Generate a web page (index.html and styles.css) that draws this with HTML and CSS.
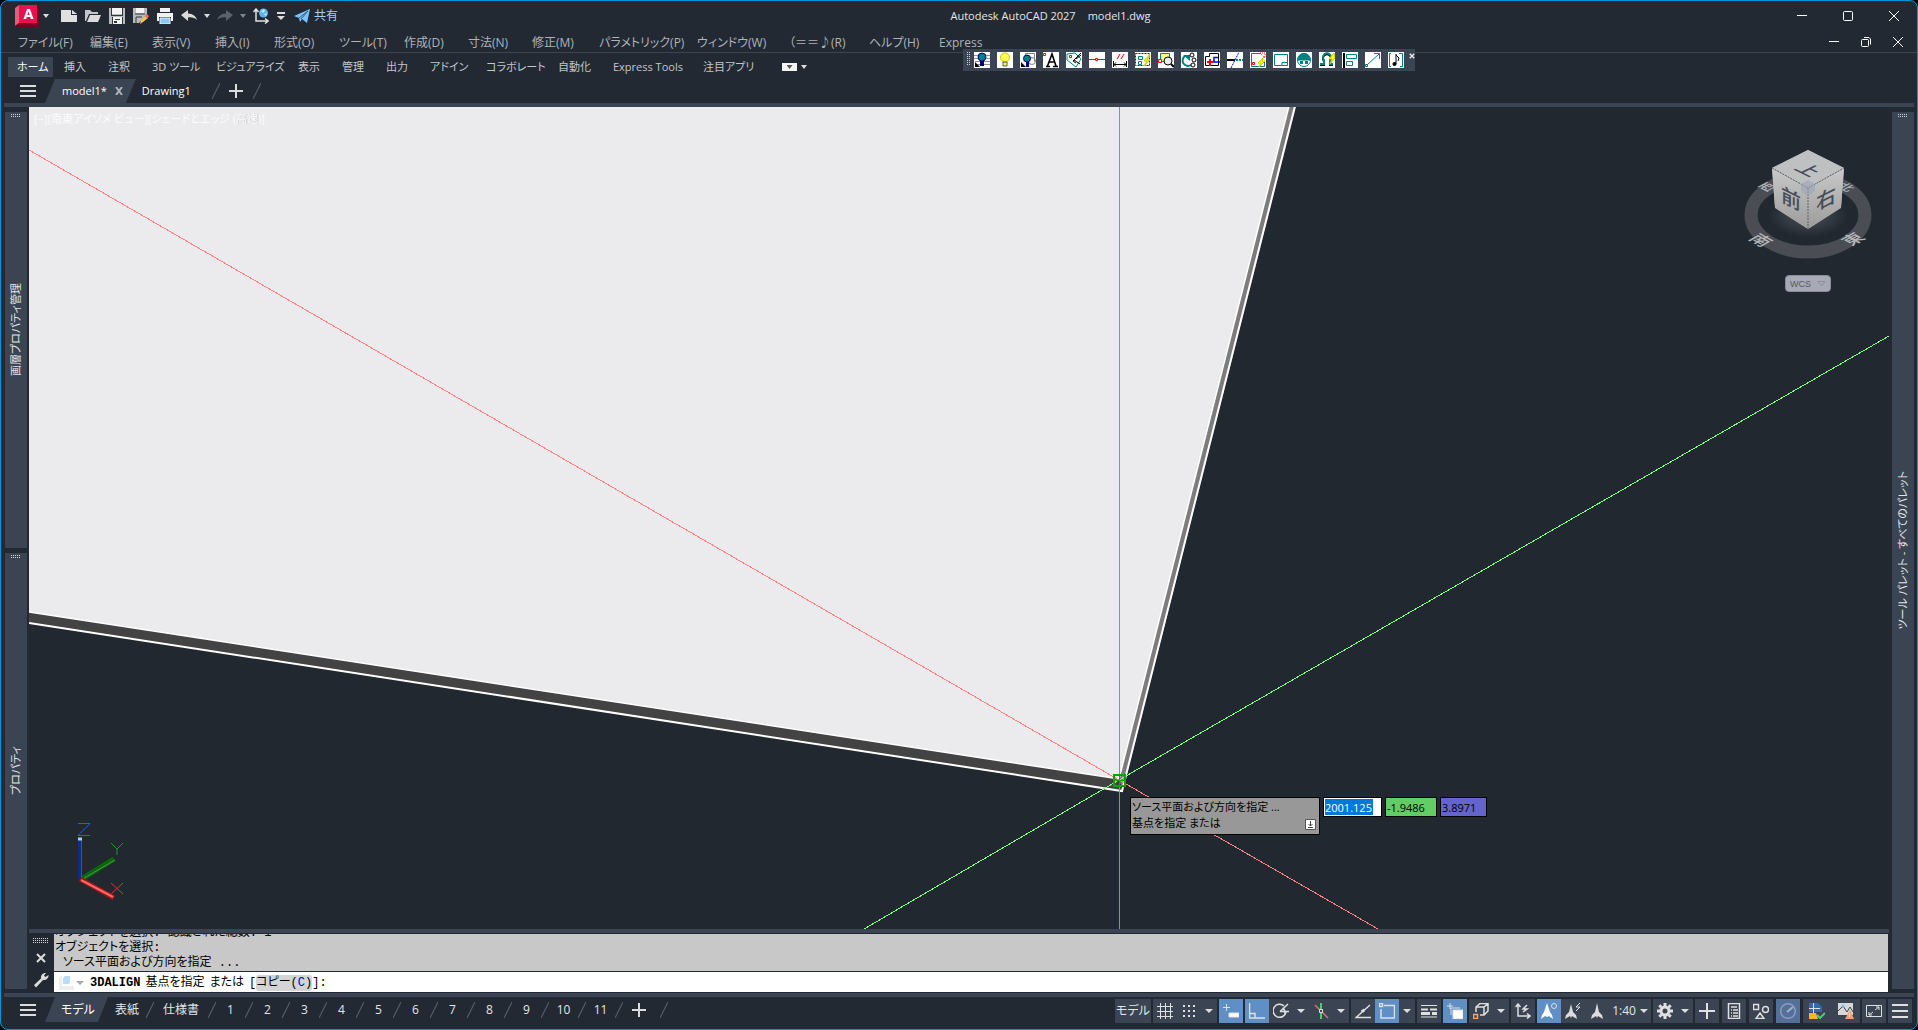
FILE: index.html
```html
<!DOCTYPE html>
<html lang="ja">
<head>
<meta charset="utf-8">
<title>Autodesk AutoCAD 2027 model1.dwg</title>
<link rel="stylesheet" href="styles.css">
</head>
<body>
<div class="app">
  <header class="titlebar">
    <div class="quick">
      <button class="qbtn logo" aria-label="アプリケーション メニュー"><svg width="24" height="22" viewBox="0 0 24 22"><path d="M0 3L4 0V18L0 21z" fill="#e65a7c"/><path d="M0 21L4 18H22V0L24 2V22H3z" fill="#73061f"/><path d="M4 0H22V18H4z" fill="#e8114f"/><path d="M8.500 14L12 4h3l3.500 10h-2.700l-.6-2h-3.500l-.6 2zM12.300 10h2.300l-1.150-3.600z" fill="#fff"/></svg></button>
      <button class="qbtn caret-btn" aria-label="メニュー"><i class="caret"></i></button>
      <button class="qbtn" aria-label="新規"><svg class="i16" viewBox="0 0 16 16"><path d="M0 2h10v5h6v7H0zM11 2l5 4h-5z" fill="#e0e0e0"/></svg></button>
      <button class="qbtn" aria-label="開く"><svg class="i16" viewBox="0 0 16 16"><path d="M0 2h5l2 2h6v2H4L1 13H0z" fill="#c4c6c9"/><path d="M5 7h11l-3 7H2z" fill="#dcdcdc"/></svg></button>
      <button class="qbtn" aria-label="上書き保存"><svg class="i16" viewBox="0 0 16 16"><path d="M0 0h16v16H0z" fill="#b9bbbe"/><path d="M3 0h10v6H3zM4 9h9v7H4z" fill="#f4f4f4"/><path d="M2 0h1v7h10V0h1v8H2z" fill="#33363c"/><path d="M3 9h1v7H3zM13 9h1v7h-1zM6 11h5v1H6zM5 13h3v2H5z" fill="#33363c"/></svg></button>
      <button class="qbtn" aria-label="名前を付けて保存"><svg class="i16" viewBox="0 0 16 16"><path d="M0 0h14v6L6 15H0z" fill="#b9bbbe"/><path d="M3 0h8v5H3z" fill="#f4f4f4"/><path d="M2 6h10M3 15V9h6" stroke="#33363c" fill="none"/><path d="M8 12l5-5 2 3-5 4-3 2z" fill="#f5c451"/><path d="M12 8l2-2 2 2-2 3z" fill="#f0686a"/></svg></button>
      <button class="qbtn" aria-label="印刷"><svg class="i16" viewBox="0 0 16 16"><path d="M3 0h10v4H3zM0 5h16v8h-2V9H2v4H0z" fill="#f2f2f2"/><path d="M3 10h10v6H3z" fill="#8cc8f4" stroke="#f2f2f2"/></svg></button>
      <button class="qbtn" aria-label="元に戻す"><svg class="i16" viewBox="0 0 16 16"><path d="M0 7l7-5v3.500c5 0 8 3 9 6.500-2-2-5-3-9-2.500V13z" fill="#dcdcdc"/></svg></button>
      <button class="qbtn mini" aria-label="元に戻す履歴"><i class="caret"></i></button>
      <button class="qbtn" aria-label="やり直し"><svg class="i16" viewBox="0 0 16 16"><path d="M16 7L9 2v3.500C4 5.500 1 8.500 0 12c2-2 5-3 9-2.500V13z" fill="#5b6169"/></svg></button>
      <button class="qbtn mini" aria-label="やり直し履歴"><i class="caret dim"></i></button>
      <button class="qbtn" aria-label="UCS"><svg class="i16" viewBox="0 0 16 16"><path d="M3 2v11h11M.5 4L3 1l2.500 3M12 10.500l3 2.500-3 2.500" stroke="#e0e0e0" stroke-width="1.500" fill="none"/><circle cx="10.500" cy="5" r="4.500" fill="#5eb4ee"/><path d="M8 3l3-2 1 2-2 2zM11 6l3-1-1 3z" fill="#c5e6fb"/></svg></button>
      <button class="qbtn mini wide" aria-label="カスタマイズ"><i class="caret over"></i></button>
      <a class="share" href="#"><svg width="16" height="16" viewBox="0 0 16 16"><path d="M0 8L16 1 13 15 8 11 6 14 5 10z" fill="#7cc4fb"/><path d="M5 10L14 3 7 11" fill="none" stroke="#2b5f8a"/></svg>共有</a>
    </div>
    <h1 class="title"><span>Autodesk AutoCAD 2027</span><span>model1.dwg</span></h1>
    <div class="winbtns">
      <button aria-label="最小化"><svg width="10" height="10"><path d="M0 4.500h10" /></svg></button>
      <button aria-label="最大化"><svg width="10" height="10"><rect x=".5" y=".5" width="9" height="9" rx="1"/></svg></button>
      <button aria-label="閉じる"><svg width="10" height="10"><path d="M0 0l10 10M10 0L0 10"/></svg></button>
    </div>
  </header>

  <nav class="menubar" aria-label="メニュー バー">
    <div class="menus">
      <a href="#">ファイル(F)</a><a href="#">編集(E)</a><a href="#">表示(V)</a><a href="#">挿入(I)</a><a href="#">形式(O)</a><a href="#">ツール(T)</a><a href="#">作成(D)</a><a href="#">寸法(N)</a><a href="#">修正(M)</a><a href="#">パラメトリック(P)</a><a href="#">ウィンドウ(W)</a><a href="#">（＝＝♪(R)</a><a href="#">ヘルプ(H)</a><a href="#">Express</a>
    </div>
    <div class="winbtns small">
      <button aria-label="図面を最小化"><svg width="10" height="10"><path d="M0 4.500h10"/></svg></button>
      <button aria-label="元のサイズ"><svg width="10" height="10"><rect x=".5" y="2.500" width="7" height="7" rx="1"/><path d="M3 .5h5l1.500 1.500v5.500"/></svg></button>
      <button aria-label="図面を閉じる"><svg width="10" height="10"><path d="M0 0l10 10M10 0L0 10"/></svg></button>
    </div>
  </nav>

  <nav class="ribbon" aria-label="リボン">
    <a href="#" class="on">ホーム</a><a href="#">挿入</a><a href="#">注釈</a><a href="#">3D ツール</a><a href="#">ビジュアライズ</a><a href="#">表示</a><a href="#">管理</a><a href="#">出力</a><a href="#">アドイン</a><a href="#">コラボレート</a><a href="#">自動化</a><a href="#">Express Tools</a><a href="#">注目アプリ</a>
    <button class="ribmode" aria-label="リボン表示"><span class="chip"><i class="caret"></i></span><i class="caret"></i></button>
  </nav>

  <div class="toolbar">
    <span class="grip"></span>
    <button aria-label="画層表示"><svg viewBox="0 0 16 16"><path d="M0 3.500h16M0 6.500h16M1 9.500h15M3 12.500h13" stroke="#909090"/><circle cx="8" cy="5" r="4" fill="#008080" stroke="#000080"/><path d="M6 9h4v5H6z" fill="#000080"/><path d="M1 10v5h5z" fill="#000"/></svg></button>
    <button aria-label="電球"><svg viewBox="0 0 16 16"><circle cx="8" cy="5.500" r="4.500" fill="#ffff50" stroke="#d0c000"/><path d="M6 10h4v4H6z" fill="#ffff50" stroke="#554"/></svg></button>
    <button aria-label="画層"><svg viewBox="0 0 16 16"><path d="M5.500 4V1.500h9v8" stroke="#808080" fill="none"/><circle cx="12" cy="9" r="3.500" stroke="#808080" fill="none"/><circle cx="7" cy="6.500" r="3.500" fill="#008080" stroke="#000080"/><path d="M6 10h3v5H6z" fill="#000080"/><path d="M1 10v5h5z" fill="#000"/></svg></button>
    <button aria-label="文字"><svg viewBox="0 0 16 16"><path d="M3 14.500h4M10 14.500h5M4.500 14L9 2l4 12M6 10h6" stroke="#000" stroke-width="1.600" fill="none"/><path d="M.5 1.500h2v2h-2z" fill="#fff" stroke="red"/></svg></button>
    <button aria-label="タグ"><svg viewBox="0 0 16 16"><path d="M1 2l8-1 6 6-5 8-9-7z" fill="none" stroke="#008080"/><path d="M15 1L8 8l6 4M8 8l-1 1 3 2M15 3l-5 4" stroke="#000" fill="none"/><path d="M3.500 3.500h2v2h-2z" stroke="red" fill="#fff"/></svg></button>
    <button aria-label="中点"><svg viewBox="0 0 16 16"><path d="M0 7.500h16" stroke="#008000"/><path d="M6.500 6.500h2v2h-2z" fill="#fff" stroke="red"/></svg></button>
    <button aria-label="寸法"><svg viewBox="0 0 16 16"><path d="M1.500 9v6M14.500 9v6M2 12.500h12M4 10.500l-2 2 2 2M12 10.500l2 2-2 2" stroke="#000" fill="none"/><path d="M5 7l3-5M9 7l3-5" stroke="red"/></svg></button>
    <button aria-label="クイック選択"><svg viewBox="0 0 16 16"><path d="M.5 1.500h14v12H.5z" fill="none" stroke="#800000" stroke-width="1" stroke-dasharray="2 1"/><path d="M3.500 4.500h4v3h-4zM3.500 9.500h3v3h-3z" fill="none" stroke="#008080"/><path d="M14 3l-5 6h3l-3 5 6-6h-3l3-5z" fill="#ff0" stroke="#cc0"/></svg></button>
    <button aria-label="検索"><svg viewBox="0 0 16 16"><path d="M2.500 1.500h9v8h-9z" fill="#ffff80" stroke="#008080"/><path d="M.5 7.500h3v3h-3z" fill="#fff" stroke="red"/><circle cx="10" cy="9" r="4" fill="#eee" stroke="#000"/><path d="M13 12l3 3" stroke="#000" stroke-width="2"/></svg></button>
    <button aria-label="回転"><svg viewBox="0 0 16 16"><path d="M4 4a5 5 0 1 0 6 9" fill="none" stroke="#008080" stroke-width="2"/><path d="M2 3h7v6z" fill="#008080"/><circle cx="11" cy="3" r="2" fill="#fff" stroke="#000"/><circle cx="13" cy="8" r="2" fill="#fff" stroke="#000"/><circle cx="12" cy="13" r="2" fill="#fff" stroke="#000"/></svg></button>
    <button aria-label="ブロック"><svg viewBox="0 0 16 16"><path d="M1.500 4.500h4v-3h9v12h-13z" fill="#fff" stroke="#000"/><path d="M6 7v7M3 10h6" stroke="red" stroke-width="2"/><path d="M10 9.500V5.500h4M9 10h7" stroke="#00f" stroke-width="1.500" fill="none"/></svg></button>
    <button aria-label="トリム"><svg viewBox="0 0 16 16"><path d="M0 8h8" stroke="#000" stroke-width="2"/><path d="M9 8h7" stroke="#008080" stroke-width="2" stroke-dasharray="2 1"/><path d="M4 16l8-16" stroke="#00f" stroke-dasharray="2 1"/></svg></button>
    <button aria-label="領域"><svg viewBox="0 0 16 16"><path d="M10 1.500H1.500v13h13V9" fill="none" stroke="#008080"/><path d="M10 1l5 5V1z" fill="none" stroke="red" stroke-dasharray="1 1"/><path d="M2.500 10.500h2v2h-2z" fill="#fff" stroke="red"/><path d="M14 5l-6 6h3l-2 4 6-6h-3z" fill="#ff0" stroke="#cc0"/></svg></button>
    <button aria-label="ビューポート"><svg viewBox="0 0 16 16"><path d="M1.500 2.500h13v11H9M1.500 2.500v11H9v-3h6" fill="none" stroke="#008080"/></svg></button>
    <button aria-label="顔"><svg viewBox="0 0 16 16"><circle cx="8" cy="8" r="6.500" fill="#fff" stroke="#008080"/><path d="M2 7a6 6 0 0 1 12 0z" fill="#008080"/><path d="M1 7.500h14" stroke="#008080" stroke-width="2"/><path d="M4 9h3v3H4zM9 9h3v3H9z" fill="#008080"/></svg></button>
    <button aria-label="スナップ"><svg viewBox="0 0 16 16"><path d="M1 13h4V9a4 4 0 1 1 6 0v4h3" fill="none" stroke="#000" stroke-width="2"/><path d="M1 12h4V8a4 4 0 1 1 6 0v4h3" fill="none" stroke="#008080" stroke-width="2"/><path d="M15 1l-5 6h3l-2 5 5-6z" fill="#ff0" stroke="#cc0"/></svg></button>
    <button aria-label="整列"><svg viewBox="0 0 16 16"><path d="M2 1v15" stroke="#000" stroke-width="2"/><path d="M4.500 2.500h10v4h-10zM4.500 9.500h6v4h-6z" fill="none" stroke="#008080"/></svg></button>
    <button aria-label="線分"><svg viewBox="0 0 16 16"><path d="M2 13L14 2M9 1.500h5.500V7" fill="none" stroke="#008080"/><path d="M.5 12.500h2v2h-2z" fill="#fff" stroke="#008080"/></svg></button>
    <button aria-label="音符"><svg viewBox="0 0 16 16"><path d="M3 1.500H1.500v13H3M11 1.500h3.500v13H12" fill="none" stroke="#008080"/><path d="M8 2v10M8 3l3 3-1 3" fill="none" stroke="#000"/><circle cx="6.500" cy="12" r="2" fill="#000"/></svg></button>
    <button class="tclose" aria-label="ツールバーを閉じる"><svg viewBox="0 0 8 8"><path d="M1 1l6 6M7 1L1 7" stroke="#e4e4e4" stroke-width="2"/></svg></button>
  </div>

  <nav class="doctabs" aria-label="図面タブ">
    <button class="burger" aria-label="図面一覧"></button>
    <a href="#" class="dtab on">model1*<svg width="8" height="8" viewBox="0 0 8 8"><path d="M1 0l6 8M7 0L1 8" stroke="#aeb3ba" stroke-width="2"/></svg></a>
    <a href="#" class="dtab">Drawing1</a>
    <i class="slash"></i>
    <button class="plus" aria-label="新規図面"></button>
    <i class="slash"></i>
  </nav>

  <div class="work">
    <aside class="rail left">
      <section><span class="dots"></span><h2>画層プロパティ管理</h2></section>
      <section><span class="dots"></span><h2>プロパティ</h2></section>
    </aside>

    <main class="center">
      <div class="canvas">
        <svg class="scene" aria-hidden="true">
          <path d="M0 505V0H1260L1090 672z" fill="#ebebed"/>
          <path d="M0 505L1090 672 1093 684 0 516z" fill="#434343"/>
          <path d="M1260 0h7L1094 683l-4-10z" fill="#7c7c7c"/>
          <path d="M0 505L1090 672 1260-1" fill="none" stroke="#fff" stroke-width="1.500"/>
          <path d="M0 516L1093 684 1266-1" fill="none" stroke="#fff" stroke-width="2"/>
          <g shape-rendering="crispEdges" fill="none">
            <path d="M0 43L1090 673 1349 822" stroke="#ff8080"/>
            <path d="M835 822L1090 673 1860 229 2900-371" stroke="#80ff80"/>
            <path d="M1090.500 0V2000" stroke="#8080ff"/>
            <path d="M1085 668h11v11h-11z" stroke="#00a800" stroke-width="2"/>
            <path d="M1085 673.500h11M1090.500 668v11" stroke="#00a800"/>
          </g>
        </svg>
        <span class="viewlabel">[−][南東アイソメ ビュー][シェードとエッジ (<span>高速</span>)]</span>

        <div class="viewcube">
          <svg width="144" height="130" viewBox="0 0 144 130">
            <defs>
              <linearGradient id="face" x1="0" y1="0" x2="0" y2="1"><stop offset="0" stop-color="#c9c9c9"/><stop offset="1" stop-color="#9c9c9c"/></linearGradient>
              <radialGradient id="glow"><stop offset="0" stop-color="#4c545c"/><stop offset="1" stop-color="#212830"/></radialGradient>
            </defs>
            <ellipse cx="72" cy="75" rx="57" ry="37" fill="none" stroke="#4a4d54" stroke-width="13"/>
            <ellipse cx="72" cy="75" rx="40" ry="22" fill="url(#glow)"/>
            <g class="compass">
              <text transform="matrix(.8 -.42 .8 .42 31 47)" y="5">西</text>
              <text transform="matrix(.8 .42 -.8 .42 110 47)" y="5">北</text>
            </g>
            <path d="M72 10l36 18-3 40-33 21-33-21-3-40z" fill="#aaa"/>
            <path d="M36 28L72 48V89L39 67z" fill="url(#face)"/>
            <path d="M108 28L72 48V89L105 67z" fill="url(#face)"/>
            <path d="M72 10L108 28 72 48 36 28z" fill="#bfc0c2"/>
            <path d="M36 28L72 48 108 28M72 48V89" fill="none" stroke="#5a5f66" stroke-dasharray="2 1"/>
            <path d="M72 40l7 4v7l-7 5-7-5v-7z" fill="#9aa5b8" opacity=".6"/>
            <g class="facetext">
              <text transform="matrix(.87 .43 -.87 .43 72 30)" y="7">上</text>
              <text transform="matrix(1 .5 0 1 55 58)" y="8">前</text>
              <text transform="matrix(1 -.5 0 1 90 58)" y="8">右</text>
            </g>
            <g class="compass big">
              <text transform="matrix(.8 .45 -.8 .45 25 100)" y="7">南</text>
              <text transform="matrix(.8 -.45 .8 .45 117 99)" y="7">東</text>
            </g>
          </svg>
          <button class="wcs">WCS<svg width="9" height="6"><path d="M1 .5h7L4.500 5z" fill="none" stroke="#8c8e99"/></svg></button>
        </div>

        <svg class="ucs" width="60" height="90" viewBox="0 0 60 90" aria-hidden="true">
          <path d="M7 1.500h12L7 13.500h12" fill="none" stroke="#1060ff"/>
          <path d="M40 21l6 6 6-6M46 27v6" fill="none" stroke="#18a018"/>
          <path d="M40 61l12 11M52 61L40 72" fill="none" stroke="#e83030"/>
          <path d="M9 58L43 37" stroke="#086808" stroke-width="5"/><path d="M10 58L44 38" stroke="#4a9a4a"/>
          <path d="M9 58V17" stroke="#0a2f80" stroke-width="4"/><path d="M10.500 57V17" stroke="#1560b8"/><path d="M7 17h4" stroke="#a0d0ff" stroke-width="3"/>
          <path d="M9 57L43 76" stroke="#981818" stroke-width="5"/><path d="M10 58L42 75" stroke="#ff6868" stroke-width="2"/>
        </svg>

        <div class="dyn">
          <p class="tip"><span>ソース平面および方向を指定 ...</span><span>基点を指定 または</span>
            <svg width="11" height="11" viewBox="0 0 11 11"><path d="M.5.5h10v10H.5z" fill="#fff" stroke="#555"/><path d="M5.500 2v5M3.500 5l2 2 2-2M3 8.500h5" fill="none" stroke="#444"/></svg></p>
          <input class="vx" aria-label="X" value="2001.125">
          <input class="vy" aria-label="Y" value="-1.9486">
          <input class="vz" aria-label="Z" value="3.8971">
        </div>
      </div>

      <section class="command">
        <div class="cmdside">
          <span class="cgrip"></span>
          <button aria-label="閉じる"><svg width="10" height="10" viewBox="0 0 10 10"><path d="M1 1l8 8M9 1L1 9" stroke="#dcdcdc" stroke-width="2"/></svg></button>
          <button aria-label="カスタマイズ"><svg width="16" height="16" viewBox="0 0 16 16"><path d="M1 13L8 6.500C7.500 3 10 .5 13 1L11 3.500l1.500 1.500L15.500 3C16 6 13 8.500 10 8L3 15.500z" fill="#dcdcdc"/></svg></button>
        </div>
        <div class="cmdmain">
          <div class="history">
            <p>オブジェクトを選択: 認識された総数: 1</p>
            <p>オブジェクトを選択:</p>
            <p class="ind">ソース平面および方向を指定 ...</p>
          </div>
          <label class="prompt">
            <svg width="16" height="16" viewBox="0 0 16 16"><path d="M0 3l3-3v11h12v4H0z" fill="#eceded"/><path d="M4 3l2-2h5v6l-1 2H4z" fill="#b8dbf6"/></svg>
            <i class="caret grey"></i>
            <b>3DALIGN</b><span>基点を指定</span><span>または</span>
            <span class="opt"><em>[</em><button>コピー(<strong>C</strong>)</button><em>]:</em></span>
            <input aria-label="コマンド">
          </label>
        </div>
      </section>
    </main>

    <aside class="rail right">
      <section><span class="dots"></span><h2>ツール パレット - すべてのパレット</h2></section>
    </aside>
  </div>

  <footer class="status">
    <nav class="layouts" aria-label="レイアウト タブ">
      <button class="burger" aria-label="レイアウト一覧"></button>
      <a href="#" class="dtab on">モデル</a>
      <a href="#" class="lt wide">表紙</a><a href="#" class="lt wider">仕様書</a><a href="#" class="lt">1</a><a href="#" class="lt">2</a><a href="#" class="lt">3</a><a href="#" class="lt">4</a><a href="#" class="lt">5</a><a href="#" class="lt">6</a><a href="#" class="lt">7</a><a href="#" class="lt">8</a><a href="#" class="lt">9</a><a href="#" class="lt">10</a><a href="#" class="lt">11</a>
      <button class="plus" aria-label="新規レイアウト"></button><i class="slash"></i>
    </nav>
    <div class="tools">
      <div class="grp"><button class="txt">モデル</button></div>
      <div class="grp"><button aria-label="グリッド"><svg viewBox="0 0 16 16"><path d="M3.500 0v16M8.500 0v16M13.500 0v16M0 3.500h16M0 8.500h16M0 13.500h16"/></svg></button><button aria-label="スナップ"><svg viewBox="0 0 16 16"><path d="M2 3h13M2 8h13M2 13h13" stroke-width="2" stroke-dasharray="2 3"/></svg></button><button class="dd" aria-label="スナップ設定"><i class="caret"></i></button></div>
      <div class="grp"><button class="on" aria-label="ダイナミック入力"><svg viewBox="0 0 16 16"><path d="M0 4.500h7M3.500 1v7"/><path d="M6 10h10v4H6z" fill="#fff"/></svg></button></div>
      <div class="grp"><button class="on" aria-label="直交モード"><svg viewBox="0 0 16 16"><path d="M.5 0v15H16M1 10.500h5V15" stroke-width="1.500"/></svg></button><button aria-label="極トラッキング"><svg viewBox="0 0 16 16"><path d="M11 3A6.500 6.500 0 1 0 13 9M7 8.500h9M7 8.500L15 1M10 5.500q2 1 2 5" stroke-width="1.500"/></svg></button><button class="dd" aria-label="極設定"><i class="caret"></i></button><button aria-label="アイソメ"><svg viewBox="0 0 16 16"><path d="M2 2l13 13" stroke="#d87070" stroke-width="1.500"/><path d="M8 0v16" stroke="#50c878" stroke-width="2"/><path d="M6.500 6.500h3v3h-3z" fill="#3b4453"/></svg></button><button class="dd" aria-label="アイソメ設定"><i class="caret"></i></button></div>
      <div class="grp"><button aria-label="オブジェクト スナップ トラッキング"><svg viewBox="0 0 16 16"><path d="M16 14.500H1L15 2" stroke-width="1.500"/><path d="M6 8l3-2v3z" fill="#dcdcdc"/></svg></button><button class="on" aria-label="オブジェクト スナップ"><svg viewBox="0 0 16 16"><path d="M5 2.500h10.500v12.500H2V6M.5.5h3v3h-3z" stroke-width="1.500"/></svg></button><button class="dd" aria-label="OSNAP設定"><i class="caret"></i></button></div>
      <div class="grp"><button aria-label="線の太さ"><svg viewBox="0 0 16 16"><path d="M0 2.500h16M0 14h16"/><path d="M0 6.500h7M9 6.500h7" stroke-width="2"/><path d="M0 10.500h9M11 10.500h5" stroke-width="3"/></svg></button></div>
      <div class="grp"><button class="on" aria-label="選択の循環"><svg viewBox="0 0 16 16"><path d="M0 3h6M3 0v6M4 12V5h9"/><path d="M6 7h10v9H6z" fill="#fff"/></svg></button></div>
      <div class="grp"><button aria-label="3D オブジェクト スナップ"><svg viewBox="0 0 16 16"><path d="M3 9V4l4-3.500h8V8l-4 4H7M3 4h8v8M11 4l4-3.500" stroke-width="1.500"/><path d="M.5 11.500h4v4h-4z" stroke="#f0a878" stroke-width="1.500"/></svg></button><button class="dd" aria-label="3D設定"><i class="caret"></i></button></div>
      <div class="grp"><button aria-label="ダイナミック UCS"><svg viewBox="0 0 16 16"><path d="M3 2v11h12M.5 4L3 1l2.500 3M12 10.500l3 2.500-3 2.500M12 2L8 6h4L8 9" stroke-width="1.500"/></svg></button></div>
      <div class="grp"><button class="on" aria-label="注釈の表示"><svg viewBox="0 0 16 16"><path d="M6 0l3 9 2 3 1 4-4-3-2 1-2-1-4 3 1-4 2-3z" fill="#fff" stroke="none"/><circle cx="13" cy="3" r="2.500"/></svg></button><button aria-label="自動尺度"><svg viewBox="0 0 16 16"><path d="M6 1l2 8 3 3 1 4-5-3-1 2-1-2-5 3 1-4 3-3z" fill="#dcdcdc" stroke="none"/><path d="M15 0l-4 4h4l-4 4"/></svg></button><button aria-label="注釈尺度"><svg viewBox="0 0 16 16"><path d="M8 0l2 9 3 3 1 4-5-3-1 2-1-2-5 3 1-4 3-3z" fill="#dcdcdc" stroke="none"/></svg></button><button class="txt scale">1:40<i class="caret"></i></button></div>
      <div class="grp"><button aria-label="ワークスペース"><svg viewBox="0 0 16 16"><circle cx="8" cy="8" r="4" stroke-width="3"/><path d="M8 0v3M8 13v3M0 8h3M13 8h3M2.300 2.300l2 2M11.700 11.700l2 2M13.700 2.300l-2 2M4.300 11.700l-2 2" stroke-width="3"/></svg></button><button class="dd" aria-label="ワークスペース設定"><i class="caret"></i></button></div>
      <div class="grp spaced"><button aria-label="注釈モニター"><svg viewBox="0 0 16 16"><path d="M8 0v16M0 8h16" stroke-width="2"/></svg></button></div>
      <div class="grp spaced"><button aria-label="単位"><svg viewBox="0 0 16 16"><path d="M2.500.5h11v15h-11z" stroke-width="1.500"/><path d="M5 4h6M5 7h1M7 7h5M5 10h1M7 10h5M5 13h1M7 13h5" stroke-width="1.500"/></svg></button></div>
      <div class="grp spaced"><button aria-label="クイック プロパティ"><svg viewBox="0 0 16 16"><path d="M.5 1.500h5v5h-5zM7 10l4 5.500H3z" stroke-width="1.500"/><circle cx="12.500" cy="6.500" r="3" stroke-width="1.500"/></svg></button></div>
      <div class="grp spaced"><button class="on mute" aria-label="グラフィックス パフォーマンス"><svg viewBox="0 0 16 16"><circle cx="8" cy="8" r="7.300" stroke="#8a9db8" stroke-width="1.500"/><path d="M7 9l6-5" stroke="#a4b2c6" stroke-width="2"/></svg></button></div>
      <div class="grp pair"><button aria-label="図面"><svg viewBox="0 0 16 16"><path d="M0 0h9l4 4v5H0z" fill="#2f6ab0" stroke="none"/><path d="M0 10h7l2 6H0z" fill="#f5b928" stroke="none"/><path d="M0 5.500h11M4.500 0v10"/><path d="M8 12l3 3 5-5" stroke="#50c878" stroke-width="2"/></svg></button><button aria-label="注意"><svg viewBox="0 0 16 16"><path d="M0 0h15v12H0z" fill="#d8d8d8" stroke="none"/><path d="M0 8l5-5 4 6 3-5 3 5" stroke="#444"/><path d="M4 2h2v2H4z" stroke="#7cc4fb"/><path d="M12 7l4 9H7z" fill="#f5a070" stroke="none"/><path d="M11.500 10v4"/></svg></button></div>
      <div class="grp"><button aria-label="フルスクリーン"><svg viewBox="0 0 16 16"><path d="M.5 2.500h15v11H.5zM9 7l4-3M10 4h3v3M7 9l-4 3M3 9v3h3"/></svg></button></div>
      <div class="grp"><button aria-label="カスタマイズ"><svg viewBox="0 0 16 16"><path d="M0 2h16M0 8h16M0 14h16" stroke-width="2"/></svg></button></div>
    </div>
  </footer>
</div>
</body>
</html>
```
FILE: styles.css
```css
:root {
  --bg: #222933;
  --panel: #3b4453;
  --canvas: #212830;
  --accent: #0696d7;
  --active: #5f8fc4;
  --text: #e4e5e7;
  --muted: #b0b3b8;
}

* { box-sizing: border-box; }

body {
  margin: 0;
  background: #000;
  color: var(--text);
  font: 12px/16px "Open Sans", "Noto Sans CJK JP", sans-serif;
  font-feature-settings: "palt";
}

a { color: inherit; text-decoration: none; white-space: nowrap; }
h1, h2, p { margin: 0; font-size: inherit; font-weight: inherit; }
svg { display: block; flex: none; }

button, input {
  margin: 0;
  padding: 0;
  border: 0;
  background: none;
  color: inherit;
  font: inherit;
  font-feature-settings: inherit;
}

.app {
  position: relative;
  display: flex;
  flex-direction: column;
  min-height: 100vh;
  overflow: hidden;
  border: 1px solid var(--accent);
  border-radius: 8px;
  background: var(--bg);
}

.caret {
  display: block;
  width: 8px;
  height: 4px;
  background: #dcdcdc;
  clip-path: polygon(0 0, 100% 0, 50% 100%);
}
.caret.dim { background: #80858c; }
.caret.grey { background: #a8a8a8; }
.caret.over {
  height: 8px;
  clip-path: polygon(0 0, 100% 0, 100% 2px, 0 2px, 0 4px, 100% 4px, 50% 100%, 0 4px);
}

/* title bar */
.titlebar { display: flex; height: 30px; }
.quick { display: flex; align-items: center; padding-left: 14px; }
.qbtn { display: flex; justify-content: center; width: 24px; }
.qbtn.mini { width: 12px; }
.qbtn.mini.wide { width: 16px; }
.qbtn.mini .caret:not(.over) { width: 6px; }
.caret-btn { width: 18px; }
.caret-btn .caret { width: 6px; margin-right: 4px; }
.i16 { width: 16px; height: 16px; }
.share { display: flex; gap: 4px; padding-left: 5px; color: #9fd2fa; }
.title {
  display: flex;
  flex: 1;
  gap: 12px;
  align-items: center;
  justify-content: center;
  padding-right: 16px;
}
.winbtns { display: flex; }
.winbtns button { display: grid; place-items: center; width: 46px; }
.winbtns path, .winbtns rect { fill: none; stroke: #fff; }

/* narrower text: title, tabs, palettes, canvas */
.title, .ribbon, .doctabs, .rail, .canvas { font-size: 11px; }

/* menu bar */
.menubar {
  display: flex;
  justify-content: space-between;
  height: 22px;
  border-bottom: 1px solid var(--panel);
  color: var(--muted);
}
.menus {
  display: grid;
  grid-template-columns: 72px 62px 63px 59px 65px 65px 64px 64px 67px 98px 92px 80px 70px 60px;
  align-items: center;
  padding: 3px 0 0 17px;
}
.winbtns.small { padding-right: 3px; }
.winbtns.small button { width: 32px; }

/* ribbon tabs */
.ribbon {
  display: grid;
  grid-template-columns: 45px 44px 44px 64px 82px 44px 44px 44px 56px 72px 55px 90px 60px 60px;
  align-items: center;
  height: 26px;
  padding: 2px 0 0 7px;
  color: #c3c6ca;
}
.ribbon a { padding: 2px 0 2px 11px; }
.ribbon .on { padding-left: 9px; background: var(--panel); color: #fff; }
.ribmode { display: flex; gap: 4px; align-items: center; padding-left: 30px; }
.ribmode .caret { flex: none; width: 6px; }
.chip { display: grid; flex: none; place-items: center; width: 15px; height: 8px; background: #f4f4f4; }
.chip .caret { background: #555; }

/* floating toolbar over the ribbon */
.toolbar {
  position: absolute;
  top: 48px;
  left: 962px;
  display: flex;
  gap: 7px;
  height: 22px;
  padding: 3px 0 3px 3px;
  background: var(--panel);
}
.toolbar button { height: 16px; background: #fff; }
.toolbar svg { width: 16px; height: 16px; }
.toolbar .tclose { height: 8px; margin-left: -2px; background: none; }
.toolbar .tclose svg { width: 6px; height: 6px; }
.grip, .dots, .cgrip {
  background: repeating-conic-gradient(#d4d6da 0 25%, transparent 0 100%) 0 0 / 2px 2px;
}
.grip { width: 4px; height: 14px; margin-right: -3px; }

/* drawing tabs */
.doctabs { display: flex; align-items: center; height: 24px; }
.burger {
  width: 16px;
  height: 12px;
  margin: 0 9px 0 19px;
  background: repeating-linear-gradient(#dcdcdc 0 2px, transparent 2px 5px);
}
.dtab { display: flex; gap: 8px; align-items: center; align-self: stretch; padding-left: 6px; color: #fff; }
.dtab.on {
  padding: 0 13px 0 17px;
  background: var(--panel);
  clip-path: polygon(10px 0, 100% 0, calc(100% - 10px) 100%, 0 100%);
}
.slash {
  flex: none;
  width: 8px;
  height: 16px;
  background: linear-gradient(to bottom right, transparent calc(50% - 1px), #5b6470 50%, transparent calc(50% + 1px));
}
.doctabs .slash { margin-left: 21px; }
.doctabs .plus { margin-left: 9px; }
.doctabs .plus + .slash { margin-left: 10px; }
.plus {
  flex: none;
  width: 14px;
  height: 14px;
  background:
    linear-gradient(#dcdcdc, #dcdcdc) center / 14px 2px no-repeat,
    linear-gradient(#dcdcdc, #dcdcdc) center / 2px 14px no-repeat;
}

/* workspace */
.work {
  display: flex;
  flex: 1;
  margin: 0 3px;
  border-top: 4px solid var(--panel);
}
.rail { display: flex; flex: none; flex-direction: column; gap: 5px; width: 25px; padding: 5px 2px 4px 1px; }
.rail.right { padding: 5px 0 4px 3px; }
.rail section {
  position: relative;
  display: grid;
  flex: 1;
  place-items: center;
  background: var(--panel);
}
.dots { position: absolute; top: 2px; left: 5px; width: 10px; height: 4px; }
.rail h2 {
  writing-mode: vertical-rl;
  text-orientation: sideways;
  transform: rotate(180deg);
  white-space: nowrap;
}

.center { display: flex; flex: 1; flex-direction: column; min-width: 0; }
.canvas { position: relative; flex: 1; overflow: hidden; background: var(--canvas); }
.scene { position: absolute; inset: 0; width: 100%; height: 100%; }
.viewlabel { position: absolute; top: 4px; left: 5px; color: #fbfbfc; white-space: nowrap; }
.viewlabel span { text-shadow: 1px 0 #c4c4c4; }

.viewcube { position: absolute; top: 33px; right: 9px; display: grid; justify-items: center; gap: 5px; }
.viewcube text { text-anchor: middle; }
.compass { fill: #b4b6b9; font-size: 14px; font-weight: 500; }
.compass.big { font-size: 19px; }
.facetext { fill: #454c57; font-size: 20px; font-weight: 500; }
.wcs {
  display: flex;
  gap: 6px;
  align-items: center;
  height: 17px;
  padding: 0 4px;
  border: 1px solid #8a8c98;
  border-radius: 4px;
  background: #a7a9b6;
  color: #585a64;
  font: 9px/12px "Liberation Sans", sans-serif;
}
.ucs { position: absolute; left: 42px; bottom: 17px; }

.dyn {
  position: absolute;
  top: 690px;
  left: 1101px;
  display: flex;
  gap: 3px;
  align-items: flex-start;
  color: #000;
}
.tip {
  display: grid;
  position: relative;
  width: 190px;
  padding: 1px 1px 3px;
  border: 1px solid #000;
  background: #989898;
}
.tip svg { position: absolute; right: 3px; bottom: 4px; }
.dyn input { height: 20px; padding: 0 1px; border: 1px solid #000; }
.vx { width: 59px; background: linear-gradient(#0078d7, #0078d7) 1px center / 48px 16px no-repeat #fff; color: #fff; }
.vy { width: 52px; background: #64cc64; }
.vz { width: 47px; background: #6464cc; }

/* command window */
.command { display: flex; border-top: 4px solid var(--panel); color: #000; }
.cmdside {
  display: flex;
  flex-direction: column;
  justify-content: space-between;
  align-items: center;
  width: 25px;
  padding: 5px 2px 5px 0;
}
.cgrip { width: 17px; height: 6px; }
.cmdmain { flex: 1; min-width: 0; padding: 1px 1px 1px 0; }
.history {
  display: flex;
  flex-direction: column;
  justify-content: flex-end;
  height: 37px;
  overflow: hidden;
  padding: 0 1px;
  background: #c8c8c8;
}
.history p { flex: none; height: 15px; line-height: 15px; white-space: pre; }
.history, .prompt { font-family: "Liberation Mono", "Noto Sans CJK JP", monospace; }
.history .ind { padding-left: 8px; }
.prompt {
  display: flex;
  gap: 5px;
  align-items: center;
  height: 20px;
  margin-top: 1px;
  padding: 2px 0 0 5px;
  background: #fff;
  white-space: nowrap;
}
.prompt .caret { margin: 0 1px 0 -4px; }
.prompt em { font-style: normal; }
.prompt button { border-radius: 3px; background: #d4d4d4; }
.prompt strong { color: #0000e0; font-weight: 400; }
.prompt input { flex: 1; min-width: 0; }

/* status bar */
.status {
  display: flex;
  justify-content: space-between;
  height: 36px;
  margin: 0 3px;
  border-top: 4px solid var(--panel);
}
.layouts { display: flex; align-items: center; height: 25px; }
.layouts .burger { margin-left: 16px; }
.layouts .dtab.on { width: 63px; padding: 0 16px; }
.lt {
  width: 37px;
  padding-right: 8px;
  background: linear-gradient(to bottom right, transparent calc(50% - 1px), #5b6470 50%, transparent calc(50% + 1px)) right center / 8px 16px no-repeat;
  text-align: center;
}
.lt.wide { width: 46px; }
.lt.wider { width: 62px; }
.layouts .plus { margin: 0 14px 0 9px; }

.tools { display: flex; gap: 2px; padding: 2px 2px 6px 0; }
.grp { display: flex; align-items: center; height: 24px; background: var(--panel); }
.grp.spaced { margin-right: 1px; }
.grp.pair { justify-content: space-around; width: 57px; }
.tools button { display: grid; place-items: center; width: 24px; height: 24px; }
.tools .dd { width: 16px; }
.tools .on { background: var(--active); }
.tools .on.mute { background: #54709a; }
.tools .txt { width: 36px; }
.tools .scale { display: flex; gap: 4px; align-items: center; justify-content: center; width: 42px; }
.tools svg { width: 16px; height: 16px; fill: none; stroke: #e0e0e0; }
```
